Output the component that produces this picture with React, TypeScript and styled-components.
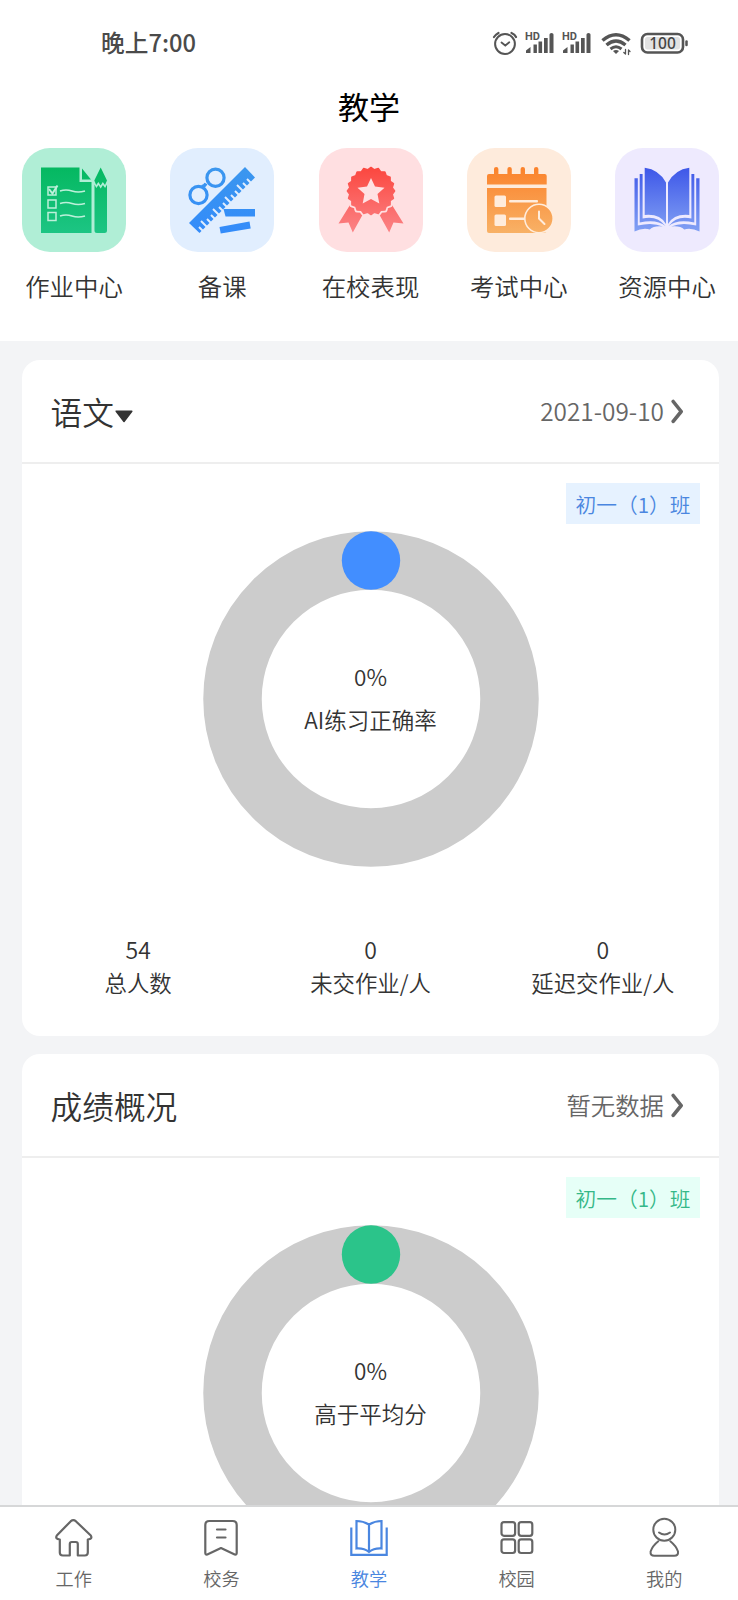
import React from "react";
import styled, { createGlobalStyle } from "styled-components";

const Global = createGlobalStyle`
  * { box-sizing: border-box; }
  body {
    margin: 0;
    background: #f3f4f6;
    font-family: "Noto Sans CJK SC", sans-serif;
    font-weight: 350;
    color: #333;
    overflow: hidden;
  }
`;

const Screen = styled.div`
  width: 738px;
  height: 1600px;
  display: flex;
  flex-direction: column;
  overflow: hidden;
  background: #f3f4f6;
`;

const Top = styled.header`
  flex: none;
  height: 341px;
  background: #fff;
`;

const StatusBar = styled.div`
  height: 84px;
  padding: 0 47px 0 101px;
  display: flex;
  align-items: center;
  justify-content: space-between;
  font-size: 23.7px;
  font-weight: 500;
  color: #4a4a4a;
  svg { margin-top: 2px; }
`;

const Title = styled.h1`
  margin: 0;
  height: 44px;
  line-height: 44px;
  text-align: center;
  font-size: 31px;
  font-weight: 400;
  color: #000;
`;

const Services = styled.nav`
  display: flex;
  justify-content: space-between;
  padding: 20px 19px 0 22px;
`;

const Service = styled.div`
  width: 104px;
  display: flex;
  flex-direction: column;
  align-items: center;
  gap: 15px;
  font-size: 24.4px;
  line-height: 38px;
  white-space: nowrap;
`;

const ServiceIcon = styled.div<{ $bg: string }>`
  width: 104px;
  height: 104px;
  border-radius: 28px;
  background: ${(p) => p.$bg};
  svg { display: block; }
`;

const Content = styled.main`
  flex: 1;
  min-height: 0;
  overflow: hidden;
  padding: 19px 19px 0 22px;
  display: flex;
  flex-direction: column;
  gap: 18px;
`;

const Card = styled.section`
  flex: none;
  height: 676px;
  border-radius: 18px;
  background: #fff;
`;

const CardHead = styled.div`
  height: 104px;
  padding: 0 35px 0 28.5px;
  display: flex;
  align-items: center;
  justify-content: space-between;
  border-bottom: 2px solid #eee;
`;

const CardTitle = styled.h2`
  margin: 0;
  display: flex;
  align-items: center;
  font-size: 31.7px;
  line-height: 46px;
  font-weight: inherit;
  svg { margin: 11px 0 0 1px; }
`;

const CardLink = styled.div`
  display: flex;
  align-items: center;
  gap: 7px;
  font-size: 24.4px;
  line-height: 36px;
  color: #666;
`;

const ChipRow = styled.div`
  display: flex;
  justify-content: flex-end;
  padding: 19px 19px 0 0;
`;

const Chip = styled.span<{ $fg: string; $bg: string }>`
  width: 134px;
  height: 41px;
  line-height: 42px;
  text-align: center;
  font-size: 20.7px;
  white-space: nowrap;
  color: ${(p) => p.$fg};
  background: ${(p) => p.$bg};
`;

const Donut = styled.div`
  margin: 7px auto 0;
  width: 336px;
  height: 336px;
  display: grid;
  place-items: center;
  > * { grid-area: 1 / 1; }
`;

const DonutText = styled.div`
  padding-bottom: 3px;
  text-align: center;
  font-size: 22.5px;
  line-height: 43px;
`;

const Stats = styled.div`
  display: grid;
  grid-template-columns: repeat(3, 1fr);
  margin-top: 66px;
  text-align: center;
  font-size: 22.4px;
  line-height: 33px;
`;

const StatValue = styled.div`
  font-size: 23px;
`;

const TabBar = styled.footer`
  flex: none;
  height: 95px;
  display: grid;
  grid-template-columns: repeat(5, 1fr);
  border-top: 2px solid #d6d7d8;
  background: #fff;
`;

const Tab = styled.div<{ $active?: boolean }>`
  display: flex;
  flex-direction: column;
  align-items: center;
  padding-top: 10px;
  font-size: 18.2px;
  line-height: 26px;
  gap: 6px;
  color: ${(p) => (p.$active ? "#4a86e0" : "#666")};
  svg { display: block; }
`;

const StatusIcons = () => (
  <svg width="202" height="30" viewBox="489 28 202 30" fill="none" stroke="#555" strokeLinecap="round">
    <circle cx="505" cy="44" r="9.9" strokeWidth="2" />
    <path d="M501.5 42.5l3.8 3 4-3.3" strokeWidth="1.8" />
    <path d="M494 37q1.700-2.500 4.500-4M511.500 33q3.500 1.500 4.500 4" strokeWidth="2.200" />
    {[0, 37].map((dx) => (
      <g key={dx} transform={`translate(${dx} 0)`} stroke="none" fill="#555">
        <text x="525" y="40.200" fontSize="11" fontWeight="700" fontFamily="Roboto, sans-serif">HD</text>
        <path d="M526 53v-2.500l4.500-3.500v6zM533.500 53v-8.500h3.400V53zM538.500 53V41.500h3.600V53zM544 53V38h3.700v15zM549.500 53V34.500q0-1.500 2-1.500 2 0 2 1.500V53z" />
      </g>
    ))}
    <g strokeLinecap="butt">
      <path d="M602.500 40.500q13.500-11.500 27 0" strokeWidth="3.600" />
      <path d="M606.500 45q9.500-8 19 0" strokeWidth="3.400" />
      <path d="M610.500 49q5.500-4.500 11 0" strokeWidth="3" />
    </g>
    <path d="M613 51q3-2 6 0l-3 3z" fill="#555" stroke="none" />
    <path d="M625.500 49.500v4.500M623.800 52.500l1.700 1.500M628.500 54.500V50M628.500 50l1.500 1.500" strokeWidth="1.300" />
    <rect x="642" y="34" width="41" height="18.500" rx="5.500" strokeWidth="2.600" />
    <rect x="645" y="37" width="35" height="12.500" rx="2.500" fill="#e2e2e2" stroke="none" />
    <path d="M686.500 41.500v3.500" strokeWidth="2.500" />
    <text x="662.500" y="49.200" textAnchor="middle" fontSize="15.500" fontWeight="500" fill="#444" stroke="none" fontFamily="Noto Sans, sans-serif">100</text>
  </svg>
);

const Gradient = ({ id, from, to }: { id: string; from: string; to: string }) => (
  <defs>
    <linearGradient id={id} gradientUnits="userSpaceOnUse" x1="0" y1="18" x2="0" y2="86">
      <stop offset="0" stopColor={from} />
      <stop offset="1" stopColor={to} />
    </linearGradient>
  </defs>
);

const HomeworkIcon = () => (
  <svg width="104" height="104">
    <Gradient id="homework" from="#04b860" to="#1dc584" />
    <g fill="url(#homework)">
      <path d="M19 19.500H57.500V34H69.500V85H19z" />
      <path d="M60 20.500L69 31.500H60z" />
      <path d="M78.700 19.500L85 32.500 83 37l-2.200-3-2.200 3.500-2.200-3.500-2.200 3L72.300 32.500z" />
      <path d="M72.500 36.500l1.800 3.500 2.200-3 2.200 3.500 2.200-3.500 2.200 3 1.900-3.500v46q0 2.500-2.500 2.500h-7.500q-2.500 0-2.500-2.500z" />
    </g>
    <g fill="none" stroke="#bdf0da" strokeWidth="1.500">
      <path d="M26 39h8v8h-8zM26 52h8v8h-8zM26 64.500h8v8h-8z" />
      <path d="M27 41l3.500 4.500 5-8" strokeWidth="2" />
      <path d="M38 43q6-2 12 0t13 0M38 55.500q6-2 12 0t13 0M38 68q6-2 12 0t13 0" />
    </g>
  </svg>
);

const rulerTicks = Array.from({ length: 13 }, (_, i) => i);

const LessonIcon = () => (
  <svg width="104" height="104">
    <Gradient id="lesson" from="#3b97ee" to="#338bfa" />
    <g fill="none" stroke="url(#lesson)" strokeWidth="3.200">
      <circle cx="45.500" cy="29.800" r="8.600" />
      <circle cx="28.500" cy="47" r="8.600" />
      <path d="M31.500 38.500q3 0 4.500-3" />
    </g>
    <path d="M19 75L75 19 85 29.500 29.500 85z" fill="url(#lesson)" />
    <g stroke="#e1eefe" strokeWidth="2">
      {rulerTicks.map((i) => {
        const x = 32.500 + i * 4;
        const y = 82.500 - i * 4;
        const n = i % 3 === 1 ? 6.500 : 4.500;
        return <path key={i} d={`M${x + 1} ${y + 1}l${-n} ${-n}`} />;
      })}
    </g>
    <g fill="url(#lesson)">
      <path d="M53.500 61H85v7.500H55.500z" />
      <path d="M49.500 79l30-5.500 1.200 7-30 5z" />
    </g>
  </svg>
);

const scallops = Array.from({ length: 40 }, (_, i) => {
  const a = (i * Math.PI) / 20 - Math.PI / 2;
  const r = i % 2 === 0 ? 23.600 : 21.500;
  return `${52 + r * Math.cos(a)},${43 + r * Math.sin(a)}`;
}).join(" ");

const AwardIcon = () => (
  <svg width="104" height="104">
    <Gradient id="award" from="#fb453d" to="#fb8588" />
    <g fill="url(#award)">
      <path d="M31.300 56.500L19.500 75.500l10-1 4.300 10L44 66z" />
      <path d="M72.700 56.500L84.500 75.500l-10-1-4.300 10L60 66z" />
    </g>
    <polygon points={scallops} fill="#ffdfe1" stroke="#ffdfe1" strokeWidth="5" strokeLinejoin="round" />
    <polygon points={scallops} fill="url(#award)" stroke="url(#award)" strokeWidth="1.500" strokeLinejoin="round" />
    <path d="M52 30l4 8.500 9.500 1.200-7 6.300 1.800 9.500-8.300-4.600-8.300 4.600 1.800-9.500-7-6.300 9.500-1.200z" fill="#ffe1e3" />
  </svg>
);

const ExamIcon = () => (
  <svg width="104" height="104">
    <Gradient id="exam" from="#fb812a" to="#f8b267" />
    <g fill="url(#exam)">
      <path d="M20 36.500V28q0-2 2-2h5v-5q0-2 2.200-2t2.200 2v5h9v-5q0-2 2.200-2t2.200 2v5h8.800v-5q0-2 2.200-2t2.200 2v5h9v-5q0-2 2.200-2t2.200 2v5h6.300q2 0 2 2v8.500z" />
      <path d="M20 40h59.500v43q0 2-2 2H22q-2 0-2-2z" />
    </g>
    <g fill="#ffecdc">
      <rect x="27.500" y="47.500" width="11.500" height="11.500" rx="1.500" />
      <rect x="27.500" y="66.500" width="11.500" height="11.500" rx="1.500" />
      <rect x="42" y="52" width="29" height="2.400" rx="1" />
      <rect x="42" y="69.500" width="18" height="2.400" rx="1" />
    </g>
    <path d="M72 84.500h8V74z" fill="#feebdc" />
    <circle cx="72" cy="70.500" r="14.200" fill="url(#exam)" stroke="#ffecdc" strokeWidth="1.600" />
    <path d="M72 63.500v7l5.500 5.500" fill="none" stroke="#ffecdc" strokeWidth="2" strokeLinecap="round" />
  </svg>
);

const ResourceIcon = () => (
  <svg width="104" height="104">
    <Gradient id="resource" from="#3c55e8" to="#84a3f4" />
    {[false, true].map((flip) => (
      <g key={String(flip)} fill="url(#resource)" transform={flip ? "translate(104 0) scale(-1 1)" : undefined}>
        <path d="M29.700 19.700Q44 21.500 51 34.500V76Q45 65.500 29.700 67z" />
        <path d="M24.700 26h2.900V70.500Q42 67 50.500 78 42 71 24.700 74.500z" />
        <path d="M19.500 30.300h3.300V77.500q15-3.500 25 1-9-1-13 3-7-2-15.300 2z" />
      </g>
    ))}
  </svg>
);

const Chevron = () => (
  <svg width="13" height="25" viewBox="0 0 13 25" fill="none" stroke="#666" strokeWidth="3.600" strokeLinecap="round" strokeLinejoin="round">
    <path d="M2.200 2.500l8 10L2.200 22.300" />
  </svg>
);

const Caret = () => (
  <svg width="18" height="13" viewBox="0 0 18 13">
    <path d="M1.200 1.200h15.600L9 11.500z" fill="#333" stroke="#333" strokeWidth="1.500" strokeLinejoin="round" />
  </svg>
);

const HomeTab = () => (
  <svg width="42" height="42" viewBox="0.700 0 42 42" fill="none" stroke="#666" strokeWidth="2.200" strokeLinejoin="round">
    <path d="M18.500 4.200q2.500-2 5 0L38.500 18.500q2 3.500-3 4v13q0 3-3 3H25.500V27q0-2-2-2h-4q-2 0-2 2v11.500h-7q-3 0-3-3v-13q-5-.5-3-4z" />
  </svg>
);

const AffairsTab = () => (
  <svg width="42" height="42" viewBox="0 0 42 42" fill="none" stroke="#666" strokeWidth="2.200" strokeLinejoin="round" strokeLinecap="round">
    <path d="M5.300 8q0-4 4-4h23.400q4 0 4 4v28q0 2-2 1.500L21 31 7.300 37.500q-2 .5-2-1.500z" />
    <path d="M17 12.500h8.500M17 20.500h8.500" />
  </svg>
);

const TeachTab = () => (
  <svg width="42" height="42" viewBox="0 0 42 42" fill="none" stroke="#4a86e0" strokeWidth="2.200">
    <path d="M3.300 10.500V37.800h35.400V10.500" />
    <path d="M21 7.500Q15 4 8.500 4v27.500q7.500-.5 12.500 3.500 5-4 12.500-3.500V4q-6.500 0-12.500 3.500zV35" />
  </svg>
);

const CampusTab = () => (
  <svg width="42" height="42" viewBox="0 0 42 42" fill="none" stroke="#666" strokeWidth="2.200">
    <rect x="5.500" y="5.200" width="13.600" height="13.600" rx="2.500" />
    <rect x="22.700" y="5.200" width="13.600" height="13.600" rx="2.500" />
    <rect x="5.500" y="22.400" width="13.600" height="13.600" rx="2.500" />
    <rect x="22.700" y="22.400" width="13.600" height="13.600" rx="2.500" />
  </svg>
);

const MineTab = () => (
  <svg width="42" height="42" viewBox="0 0 42 42" fill="none" stroke="#666" strokeWidth="2" strokeLinecap="round">
    <circle cx="21.300" cy="12.700" r="11" />
    <path d="M16 15.500q5.500 4 11 0" />
    <path d="M15.300 24.200Q9.300 29 7.600 34.500q-.5 4.300 3.700 4.300h20q4.200 0 3.700-4.300Q33.300 29 27.300 24.200" />
  </svg>
);

const Ring = ({ color }: { color: string }) => (
  <svg width="336" height="336">
    <circle cx="168" cy="168" r="138.500" fill="none" stroke="#ccc" strokeWidth="58.500" />
    <circle cx="168" cy="29.500" r="29.200" fill={color} />
  </svg>
);

const services = [
  { label: "作业中心", bg: "#b0eed6", Icon: HomeworkIcon },
  { label: "备课", bg: "#e1eefe", Icon: LessonIcon },
  { label: "在校表现", bg: "#ffdfe1", Icon: AwardIcon },
  { label: "考试中心", bg: "#feebdc", Icon: ExamIcon },
  { label: "资源中心", bg: "#eeeafe", Icon: ResourceIcon },
];

const stats = [
  { value: "54", label: "总人数" },
  { value: "0", label: "未交作业/人" },
  { value: "0", label: "延迟交作业/人" },
];

const tabs = [
  { label: "工作", Icon: HomeTab },
  { label: "校务", Icon: AffairsTab },
  { label: "教学", Icon: TeachTab, active: true },
  { label: "校园", Icon: CampusTab },
  { label: "我的", Icon: MineTab },
];

export default function App() {
  return (
    <Screen>
      <Global />
      <Top>
        <StatusBar>
          <span>晚上7:00</span>
          <StatusIcons />
        </StatusBar>
        <Title>教学</Title>
        <Services>
          {services.map(({ label, bg, Icon }) => (
            <Service key={label}>
              <ServiceIcon $bg={bg}><Icon /></ServiceIcon>
              {label}
            </Service>
          ))}
        </Services>
      </Top>
      <Content>
        <Card>
          <CardHead>
            <CardTitle>语文<Caret /></CardTitle>
            <CardLink>2021-09-10<Chevron /></CardLink>
          </CardHead>
          <ChipRow><Chip $fg="#4a86e0" $bg="#e6f2ff">初一（1）班</Chip></ChipRow>
          <Donut>
            <Ring color="#428eff" />
            <DonutText>0%<br />AI练习正确率</DonutText>
          </Donut>
          <Stats>
            {stats.map((s) => (
              <div key={s.label}>
                <StatValue>{s.value}</StatValue>
                {s.label}
              </div>
            ))}
          </Stats>
        </Card>
        <Card>
          <CardHead>
            <CardTitle>成绩概况</CardTitle>
            <CardLink>暂无数据<Chevron /></CardLink>
          </CardHead>
          <ChipRow><Chip $fg="#35b888" $bg="#e6fff7">初一（1）班</Chip></ChipRow>
          <Donut>
            <Ring color="#2bc48a" />
            <DonutText>0%<br />高于平均分</DonutText>
          </Donut>
        </Card>
      </Content>
      <TabBar>
        {tabs.map(({ label, Icon, active }) => (
          <Tab key={label} $active={active}>
            <Icon />
            {label}
          </Tab>
        ))}
      </TabBar>
    </Screen>
  );
}
